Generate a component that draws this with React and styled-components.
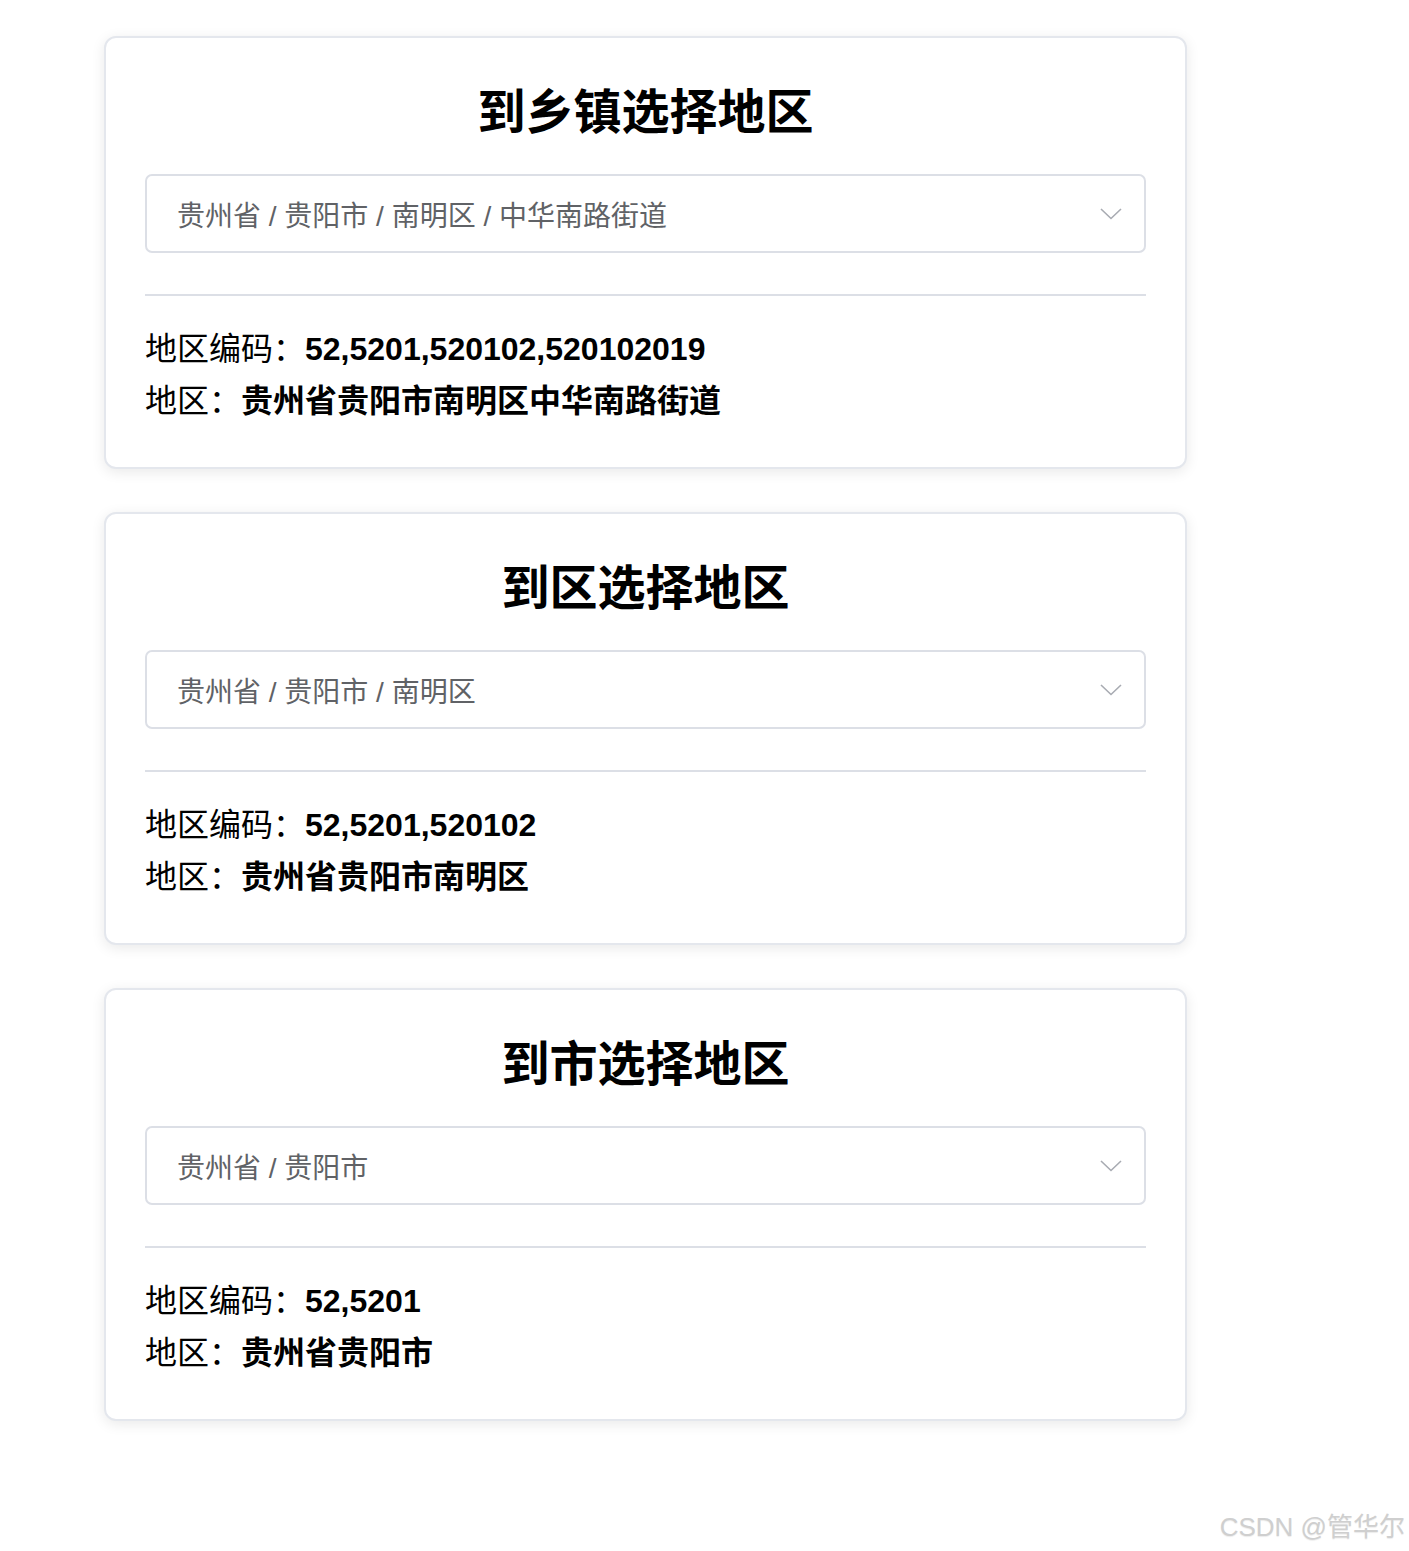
import styled, { createGlobalStyle } from 'styled-components'

const GlobalStyle = createGlobalStyle`
	html, body {
		margin: 0;
		padding: 0;
		background: #ffffff;
	}
	body {
		font-family: 'Liberation Sans', 'Noto Sans CJK SC', sans-serif;
		color: #000;
	}
`

const regions = [
	{
		title: '到乡镇选择地区',
		path: ['贵州省', '贵阳市', '南明区', '中华南路街道'],
		codes: ['52', '5201', '520102', '520102019'],
	},
	{
		title: '到区选择地区',
		path: ['贵州省', '贵阳市', '南明区'],
		codes: ['52', '5201', '520102'],
	},
	{
		title: '到市选择地区',
		path: ['贵州省', '贵阳市'],
		codes: ['52', '5201'],
	},
]

const ChevronDown = () => (
	<svg width="22" height="12" viewBox="0 0 22 12" fill="none">
		<path d="M1 1 L11 10.5 L21 1" stroke="#a8abb2" strokeWidth="1.6" />
	</svg>
)

const RegionCard = ({ title, path, codes }) => {
	return (
		<Card>
			<Title>{title}</Title>
			<Select>
				<SelectText>{path.join(' / ')}</SelectText>
				<ChevronDown />
			</Select>
			<Divider />
			<InfoRow>
				<Label>地区编码：</Label>
				<Value>{codes.join(',')}</Value>
			</InfoRow>
			<InfoRow>
				<Label>地区：</Label>
				<Value>{path.join('')}</Value>
			</InfoRow>
		</Card>
	)
}

const App = () => {
	return (
		<Page>
			<GlobalStyle />
			<List>
				{regions.map((r, index) => (
					<RegionCard key={index} {...r} />
				))}
			</List>
			<Watermark>CSDN @管华尔</Watermark>
		</Page>
	)
}

export default App

// ? styled
const Page = styled.div`
	position: relative;
	min-height: 1551px;
	box-sizing: border-box;
	padding: 36px 0 0 104px;
`

const List = styled.div`
	display: flex;
	flex-direction: column;
	gap: 43px;
	width: 1083px;
`

const Card = styled.div`
	box-sizing: border-box;
	border: 2px solid #e4e7ed;
	border-radius: 12px;
	background: #fff;
	box-shadow: 0 3px 14px rgba(0, 0, 0, 0.09);
	padding: 41px 39px 40px;
	display: flex;
	flex-direction: column;
`

const Title = styled.h2`
	margin: 0 0 27px;
	text-align: center;
	font-size: 48px;
	line-height: 68px;
	font-weight: bold;
`

const Select = styled.div`
	box-sizing: border-box;
	height: 79px;
	border: 2px solid #dcdfe6;
	border-radius: 7px;
	padding: 0 22px 0 30px;
	display: flex;
	align-items: center;
	justify-content: space-between;
`

const SelectText = styled.span`
	font-size: 28px;
	color: #606266;
	white-space: pre;
`

const Divider = styled.div`
	height: 2px;
	background: #dcdfe6;
	margin: 41px 0 27px;
`

const InfoRow = styled.div`
	display: flex;
	align-items: center;
	font-size: 32px;
	line-height: 52px;
`

const Label = styled.span`
	font-weight: normal;
`

const Value = styled.span`
	font-weight: bold;
`

const Watermark = styled.div`
	position: absolute;
	right: 4px;
	top: 1506px;
	font-size: 26px;
	font-weight: normal;
	color: #cfcfcf;
	text-shadow: 0 1px 1px rgba(0, 0, 0, 0.08);
`
